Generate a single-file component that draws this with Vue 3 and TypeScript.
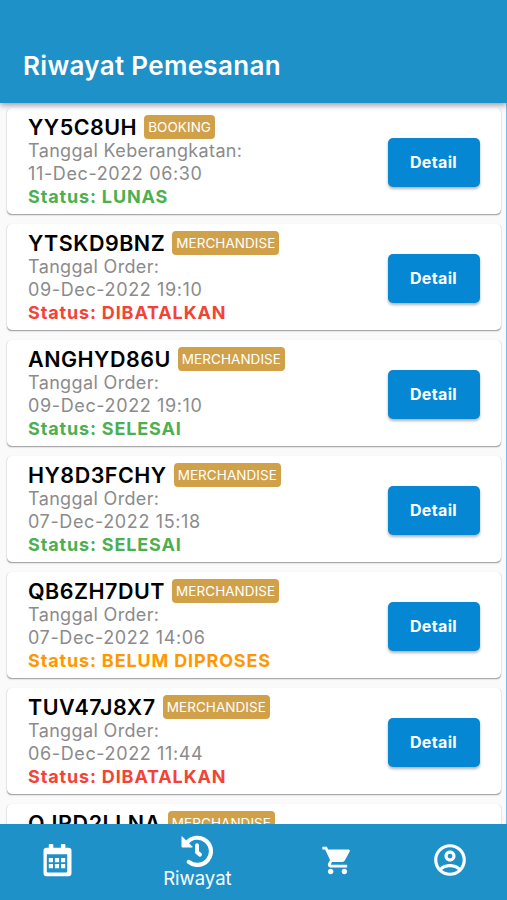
<script setup lang="ts">
interface Order {
  code: string
  kind: string
  label: string
  date: string
  status: string
  tone: 'green' | 'red' | 'orange'
}

const orders: Order[] = [
  { code: 'YY5C8UH', kind: 'BOOKING', label: 'Tanggal Keberangkatan:', date: '11-Dec-2022 06:30', status: 'LUNAS', tone: 'green' },
  { code: 'YTSKD9BNZ', kind: 'MERCHANDISE', label: 'Tanggal Order:', date: '09-Dec-2022 19:10', status: 'DIBATALKAN', tone: 'red' },
  { code: 'ANGHYD86U', kind: 'MERCHANDISE', label: 'Tanggal Order:', date: '09-Dec-2022 19:10', status: 'SELESAI', tone: 'green' },
  { code: 'HY8D3FCHY', kind: 'MERCHANDISE', label: 'Tanggal Order:', date: '07-Dec-2022 15:18', status: 'SELESAI', tone: 'green' },
  { code: 'QB6ZH7DUT', kind: 'MERCHANDISE', label: 'Tanggal Order:', date: '07-Dec-2022 14:06', status: 'BELUM DIPROSES', tone: 'orange' },
  { code: 'TUV47J8X7', kind: 'MERCHANDISE', label: 'Tanggal Order:', date: '06-Dec-2022 11:44', status: 'DIBATALKAN', tone: 'red' },
]

const next = { code: 'QJRD2LLNA', kind: 'MERCHANDISE' }
</script>

<template>
  <div class="screen">
    <header class="bar"><h1>Riwayat Pemesanan</h1></header>
    <main class="list">
      <article v-for="o in orders" :key="o.code" class="card">
        <div class="info">
          <div class="head">
            <span class="code">{{ o.code }}</span>
            <span class="badge">{{ o.kind }}</span>
          </div>
          <div class="line">{{ o.label }}</div>
          <div class="line date">{{ o.date }}</div>
          <div class="status" :class="o.tone">Status: {{ o.status }}</div>
        </div>
        <button class="detail" type="button">Detail</button>
      </article>
      <article class="card partial">
        <div class="head">
          <span class="code">{{ next.code }}</span>
          <span class="badge">{{ next.kind }}</span>
        </div>
      </article>
    </main>
    <nav class="nav">
      <a class="tab">
        <svg width="30" height="34" viewBox="0 0 30 34">
          <path fill="#fff" fill-rule="evenodd" d="M6.800 4.700V2a1 1 0 0 1 1-1h2.500a1 1 0 0 1 1 1V4.700h7.600V2a1 1 0 0 1 1-1h2.500a1 1 0 0 1 1 1V4.700h3.100a3 3 0 0 1 3 3V30.300a3 3 0 0 1-3 3h-22a3 3 0 0 1-3-3V7.700a3 3 0 0 1 3-3zM4.800 11.300V28.600a.8.8 0 0 0 .8.8H24.400a.8.8 0 0 0 .8-.8V11.300z" />
          <path fill="#fff" d="M6.800 15h4.200v4.200h-4.200zM12.900 15h4.200v4.200h-4.200zM19 15h4.200v4.200h-4.200zM6.800 21.100h4.200v4.200h-4.200zM12.900 21.100h4.200v4.200h-4.200zM19 21.100h4.200v4.200h-4.200z" />
        </svg>
      </a>
      <a class="tab active">
        <svg width="32" height="32" viewBox="0 0 32 32">
          <path fill="none" stroke="#fff" stroke-width="4.200" stroke-linecap="round" d="M6.300 7.200A13.600 13.600 0 1 1 7.800 26.900" />
          <path fill="#fff" stroke="#fff" stroke-width="1" stroke-linejoin="round" d="M1 1.700V12h10.300z" />
          <path fill="none" stroke="#fff" stroke-width="4" stroke-linecap="round" stroke-linejoin="round" d="M16 10.300V17.200L19 19.600" />
        </svg>
        <span>Riwayat</span>
      </a>
      <a class="tab">
        <svg width="33" height="33" viewBox="0 0 24 24">
          <path fill="#fff" d="M7 18c-1.100 0-1.990.9-1.990 2S5.900 22 7 22s2-.9 2-2-.9-2-2-2zM1 2v2h2l3.600 7.590-1.350 2.450c-.16.280-.25.610-.25.960 0 1.100.9 2 2 2h12v-2H7.420c-.14 0-.25-.110-.25-.250l.03-.120.900-1.630h7.450c.750 0 1.410-.410 1.750-1.030l3.580-6.490A1 1 0 0 0 20 4H5.210l-.94-2H1zm16 16c-1.100 0-1.990.9-1.990 2s.89 2 1.990 2 2-.9 2-2-.9-2-2-2z" />
        </svg>
      </a>
      <a class="tab">
        <svg width="38" height="38" viewBox="0 0 24 24">
          <path fill="#fff" d="M12,2A10,10 0 0,0 2,12A10,10 0 0,0 12,22A10,10 0 0,0 22,12A10,10 0 0,0 12,2M7.07,18.28C7.5,17.38 10.12,16.5 12,16.5C13.88,16.5 16.5,17.38 16.93,18.28C15.57,19.36 13.86,20 12,20C10.14,20 8.43,19.36 7.07,18.28M18.36,16.83C16.93,15.09 13.46,14.5 12,14.5C10.54,14.5 7.07,15.09 5.64,16.83C4.62,15.5 4,13.82 4,12C4,7.59 7.59,4 12,4C16.41,4 20,7.59 20,12C20,13.82 19.38,15.5 18.36,16.83M12,6C10.06,6 8.5,7.56 8.5,9.5C8.5,11.44 10.06,13 12,13C13.94,13 15.5,11.44 15.5,9.5C15.5,7.56 13.94,6 12,6M12,11A1.5,1.5 0 0,1 10.5,9.5A1.5,1.5 0 0,1 12,8A1.5,1.5 0 0,1 13.5,9.5A1.5,1.5 0 0,1 12,11Z" />
        </svg>
      </a>
    </nav>
  </div>
</template>

<style>
body {
  margin: 0;
}
</style>

<style scoped>
.screen {
  display: flex;
  flex-direction: column;
  width: 507px;
  height: 900px;
  overflow: hidden;
  background: #fafafa;
  font-family: Inter, 'Liberation Sans', sans-serif;
}
.bar {
  flex: none;
  display: flex;
  align-items: flex-end;
  box-sizing: border-box;
  height: 103px;
  padding: 0 23px 21px;
  background: #1e91c9;
  box-shadow: 0 2px 6px rgba(0, 0, 0, 0.4);
  z-index: 1;
}
h1 {
  margin: 0;
  font-size: 26px;
  line-height: 32px;
  font-weight: 600;
  letter-spacing: 0.32px;
  color: #fff;
}
.list {
  flex: 1;
  min-height: 0;
  overflow: hidden;
  display: flex;
  flex-direction: column;
  gap: 10px;
  padding: 5px 5px 0 7px;
  border-right: 1px solid #79bfea;
}
.card {
  flex: none;
  display: flex;
  align-items: center;
  justify-content: space-between;
  box-sizing: border-box;
  height: 106px;
  padding: 0 21px 1px 21px;
  border-radius: 5px;
  background: #fff;
  box-shadow: 0 1px 1.5px -0.5px rgba(0, 0, 0, 0.4);
}
.partial {
  align-items: flex-start;
  padding-top: 5px;
}
.head {
  display: flex;
  align-items: center;
  gap: 7px;
  box-sizing: border-box;
  height: 26px;
  padding-top: 2px;
}
.code {
  font-size: 21.5px;
  font-weight: 600;
  letter-spacing: 0.5px;
  color: #000;
}
.badge {
  box-sizing: border-box;
  height: 24px;
  padding: 0 4px;
  border-radius: 4px;
  background: #d1a149;
  color: #fff;
  font-size: 13.5px;
  line-height: 25px;
  letter-spacing: 0.06px;
}
.line,
.status {
  font-size: 18px;
  line-height: 23px;
  letter-spacing: 0.36px;
  color: #8b8b8b;
}
.line.date {
  letter-spacing: 0.62px;
}
.status {
  font-weight: 700;
  letter-spacing: 0.85px;
}
.status.green {
  color: #4caf50;
}
.status.red {
  color: #f44336;
}
.status.orange {
  color: #ff9800;
}
.detail {
  width: 92px;
  height: 49px;
  margin-top: 3px;
  padding: 0 1px 1px 0;
  border: 0;
  border-radius: 5px;
  background: #0587d4;
  box-shadow: 0 2px 3px rgba(0, 0, 0, 0.3);
  color: #fff;
  font: 700 16px Inter, 'Liberation Sans', sans-serif;
  letter-spacing: 0.35px;
}
.nav {
  flex: none;
  display: flex;
  box-sizing: border-box;
  height: 76px;
  padding: 0 1px;
  background: #1e91c9;
  z-index: 1;
}
.tab {
  flex: 2 1 0;
  display: flex;
  flex-direction: column;
  align-items: center;
  justify-content: center;
  padding-bottom: 4px;
  color: #fff;
}
.tab.active {
  flex-grow: 3;
  padding-bottom: 2px;
}
.tab span {
  margin-top: 1px;
  font-size: 18.5px;
  line-height: 20px;
  letter-spacing: 0;
}
</style>
